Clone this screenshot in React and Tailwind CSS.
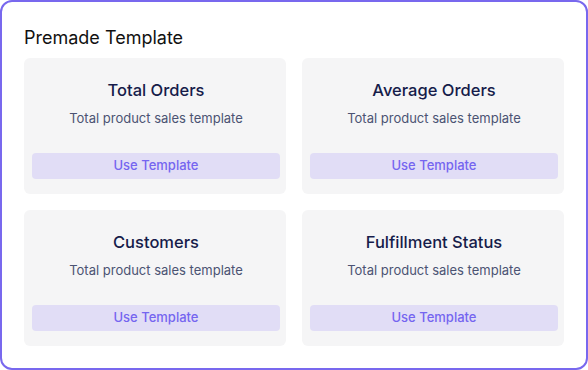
import React from "react"

const templates = [
    { title: "Total Orders", desc: "Total product sales template" },
    { title: "Average Orders", desc: "Total product sales template" },
    { title: "Customers", desc: "Total product sales template" },
    { title: "Fulfillment Status", desc: "Total product sales template" },
]

function TemplateCard({ title, desc }) {
    return (
        <div className="flex flex-col items-stretch rounded-md bg-[#f5f5f6] pl-2 pr-1.5 pt-[22px] pb-[15px]">
            <h3 className="text-center text-[16.5px] leading-5 font-medium text-[#161c4a]">{title}</h3>
            <p className="mt-2 text-center text-[13px] leading-5 text-[#4b5373]">{desc}</p>
            <button className="mt-[25px] h-[26px] rounded bg-[#e1ddf6] text-[13px] font-medium text-[#7565f0]">
                Use Template
            </button>
        </div>
    )
}

export default function App() {
    return (
        <div className="h-[370px] w-[588px] bg-white" style={{ fontFamily: "Inter, 'Noto Sans', sans-serif" }}>
            <section className="h-full w-full rounded-xl border-2 border-[#7868ee] px-[22px] pt-[22px]">
                <h2 className="text-[18px] leading-7 text-[#111111]">Premade Template</h2>
                <div className="mt-[6px] grid grid-cols-2 gap-4">
                    {templates.map((t) => (
                        <TemplateCard key={t.title} {...t} />
                    ))}
                </div>
            </section>
        </div>
    )
}
